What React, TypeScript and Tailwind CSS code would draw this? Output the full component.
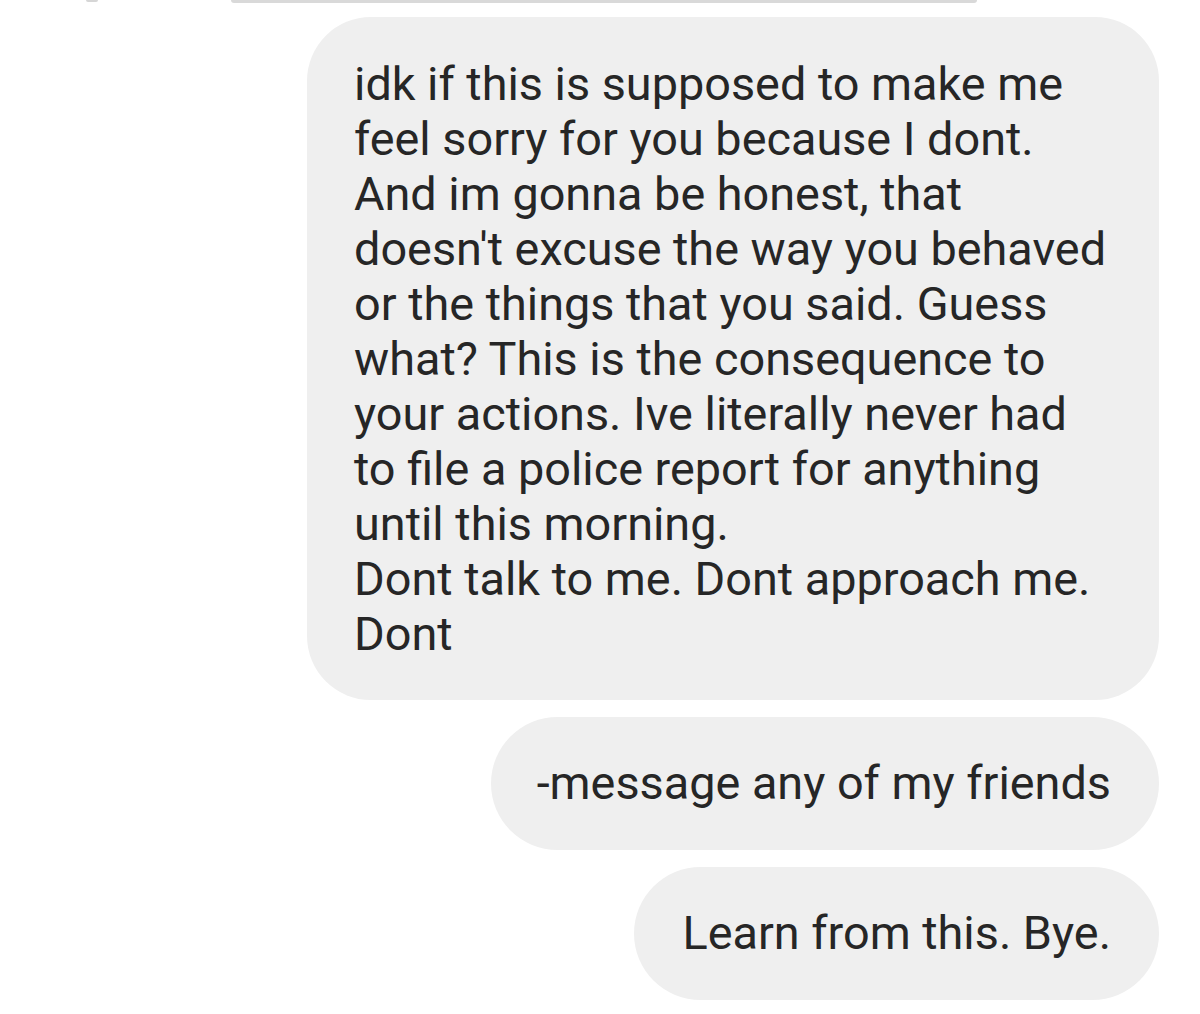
import React from "react";

const font = { fontFamily: "Roboto, 'Noto Sans', sans-serif" };

function Bubble({ children, className = "" }: { children: React.ReactNode; className?: string }) {
  return (
    <div className={`bg-[#efefef] text-[#262626] text-[46.8px] leading-[55px] ${className}`}>
      {children}
    </div>
  );
}

export default function App() {
  return (
    <div className="min-h-[1014px] w-[1200px] bg-white" style={font}>
      {/* bottom edges of the previous messages */}
      <div className="flex h-[3px] items-start">
        <div className="ml-[86px] h-[2px] w-[12px] rounded-b-full bg-[#d6d6d6]" />
        <div className="ml-[133px] h-[3px] w-[746px] rounded-b-[3px] bg-[#d9d9d9]" />
      </div>

      <div className="mt-[14px] flex flex-col items-end gap-[17px] pr-[41px]">
        <Bubble className="w-[852px] rounded-[64px] px-[47px] pt-[40px] pb-[38px]">
          idk if this is supposed to make me feel sorry for you because I dont. And im gonna be
          honest, that doesn't excuse the way you behaved or the things that you said. Guess
          what? This is the consequence to your actions. Ive literally never had to file a police
          report for anything until this morning.
          <br />
          Dont talk to me. Dont approach me. Dont
        </Bubble>

        <Bubble className="flex h-[133px] items-center rounded-full pl-[46px] pr-[48px]">
          -message any of my friends
        </Bubble>

        <Bubble className="flex h-[133px] items-center rounded-full pl-[48px] pr-[48px]">
          Learn from this. Bye.
        </Bubble>
      </div>
    </div>
  );
}
